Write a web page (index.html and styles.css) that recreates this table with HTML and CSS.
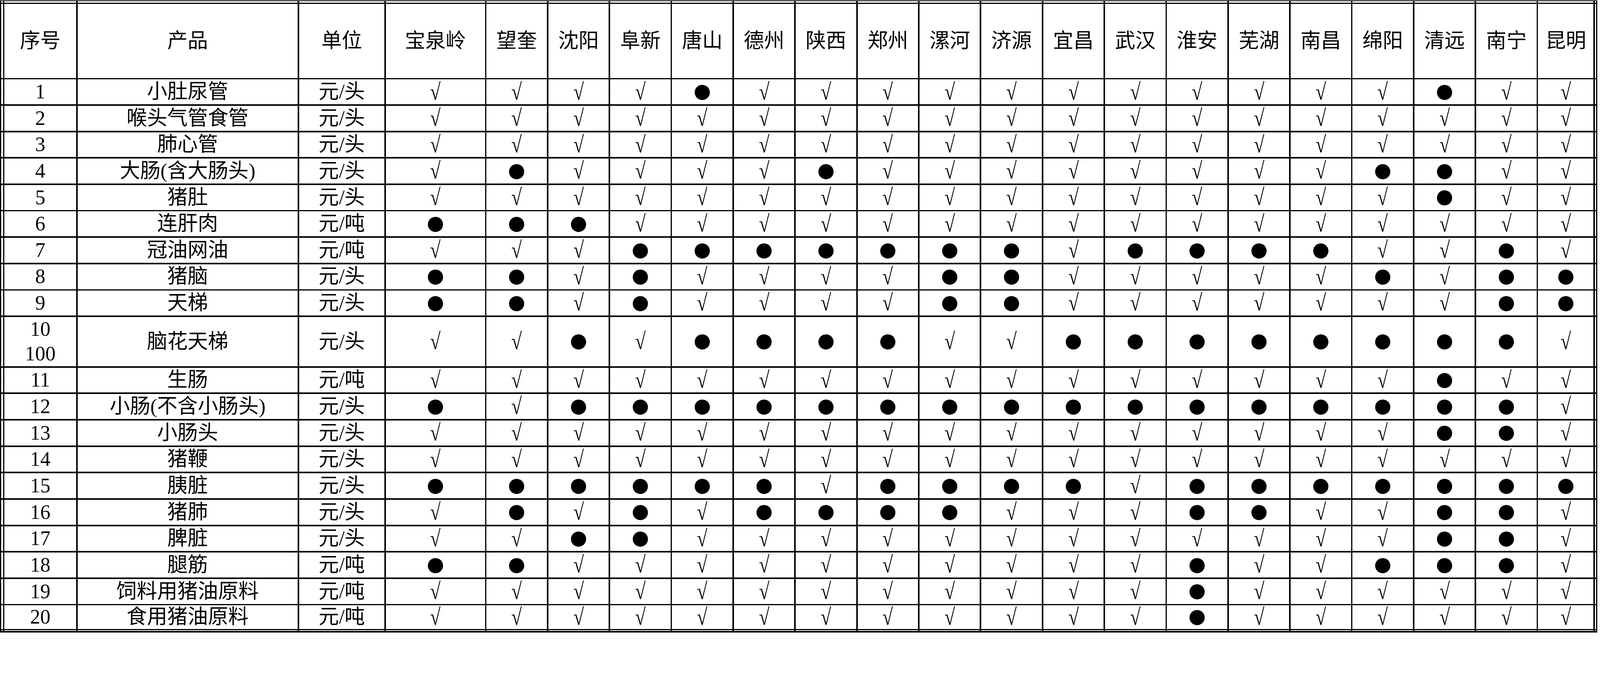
FILE: index.html
```html
<!DOCTYPE html>
<html lang="zh-CN">
<head>
<meta charset="utf-8">
<title>副产品表</title>
<link rel="stylesheet" href="styles.css">
</head>
<body>
<div class="sheet">
<div class="e"></div><div class="e"></div><div class="e"></div><div class="e"></div><div class="e"></div><div class="e"></div><div class="e"></div><div class="e"></div><div class="e"></div><div class="e"></div><div class="e"></div><div class="e"></div><div class="e"></div><div class="e"></div><div class="e"></div><div class="e"></div><div class="e"></div><div class="e"></div><div class="e"></div><div class="e"></div><div class="e"></div><div class="e"></div><div class="e"></div><div class="e"></div>
<div class="e"></div><div class="c">序号</div><div class="c">产品</div><div class="c">单位</div><div class="c">宝泉岭</div><div class="c">望奎</div><div class="c">沈阳</div><div class="c">阜新</div><div class="c">唐山</div><div class="c">德州</div><div class="c">陕西</div><div class="c">郑州</div><div class="c">漯河</div><div class="c">济源</div><div class="c">宜昌</div><div class="c">武汉</div><div class="c">淮安</div><div class="c">芜湖</div><div class="c">南昌</div><div class="c">绵阳</div><div class="c">清远</div><div class="c">南宁</div><div class="c">昆明</div><div class="e"></div>
<div class="e"></div><div class="c">1</div><div class="c">小肚尿管</div><div class="c">元/头</div><div class="c"><span class="v">√</span></div><div class="c"><span class="v">√</span></div><div class="c"><span class="v">√</span></div><div class="c"><span class="v">√</span></div><div class="c d">●</div><div class="c"><span class="v">√</span></div><div class="c"><span class="v">√</span></div><div class="c"><span class="v">√</span></div><div class="c"><span class="v">√</span></div><div class="c"><span class="v">√</span></div><div class="c"><span class="v">√</span></div><div class="c"><span class="v">√</span></div><div class="c"><span class="v">√</span></div><div class="c"><span class="v">√</span></div><div class="c"><span class="v">√</span></div><div class="c"><span class="v">√</span></div><div class="c d">●</div><div class="c"><span class="v">√</span></div><div class="c"><span class="v">√</span></div><div class="e"></div>
<div class="e"></div><div class="c">2</div><div class="c">喉头气管食管</div><div class="c">元/头</div><div class="c"><span class="v">√</span></div><div class="c"><span class="v">√</span></div><div class="c"><span class="v">√</span></div><div class="c"><span class="v">√</span></div><div class="c"><span class="v">√</span></div><div class="c"><span class="v">√</span></div><div class="c"><span class="v">√</span></div><div class="c"><span class="v">√</span></div><div class="c"><span class="v">√</span></div><div class="c"><span class="v">√</span></div><div class="c"><span class="v">√</span></div><div class="c"><span class="v">√</span></div><div class="c"><span class="v">√</span></div><div class="c"><span class="v">√</span></div><div class="c"><span class="v">√</span></div><div class="c"><span class="v">√</span></div><div class="c"><span class="v">√</span></div><div class="c"><span class="v">√</span></div><div class="c"><span class="v">√</span></div><div class="e"></div>
<div class="e"></div><div class="c">3</div><div class="c">肺心管</div><div class="c">元/头</div><div class="c"><span class="v">√</span></div><div class="c"><span class="v">√</span></div><div class="c"><span class="v">√</span></div><div class="c"><span class="v">√</span></div><div class="c"><span class="v">√</span></div><div class="c"><span class="v">√</span></div><div class="c"><span class="v">√</span></div><div class="c"><span class="v">√</span></div><div class="c"><span class="v">√</span></div><div class="c"><span class="v">√</span></div><div class="c"><span class="v">√</span></div><div class="c"><span class="v">√</span></div><div class="c"><span class="v">√</span></div><div class="c"><span class="v">√</span></div><div class="c"><span class="v">√</span></div><div class="c"><span class="v">√</span></div><div class="c"><span class="v">√</span></div><div class="c"><span class="v">√</span></div><div class="c"><span class="v">√</span></div><div class="e"></div>
<div class="e"></div><div class="c">4</div><div class="c">大肠(含大肠头)</div><div class="c">元/头</div><div class="c"><span class="v">√</span></div><div class="c d">●</div><div class="c"><span class="v">√</span></div><div class="c"><span class="v">√</span></div><div class="c"><span class="v">√</span></div><div class="c"><span class="v">√</span></div><div class="c d">●</div><div class="c"><span class="v">√</span></div><div class="c"><span class="v">√</span></div><div class="c"><span class="v">√</span></div><div class="c"><span class="v">√</span></div><div class="c"><span class="v">√</span></div><div class="c"><span class="v">√</span></div><div class="c"><span class="v">√</span></div><div class="c"><span class="v">√</span></div><div class="c d">●</div><div class="c d">●</div><div class="c"><span class="v">√</span></div><div class="c"><span class="v">√</span></div><div class="e"></div>
<div class="e"></div><div class="c">5</div><div class="c">猪肚</div><div class="c">元/头</div><div class="c"><span class="v">√</span></div><div class="c"><span class="v">√</span></div><div class="c"><span class="v">√</span></div><div class="c"><span class="v">√</span></div><div class="c"><span class="v">√</span></div><div class="c"><span class="v">√</span></div><div class="c"><span class="v">√</span></div><div class="c"><span class="v">√</span></div><div class="c"><span class="v">√</span></div><div class="c"><span class="v">√</span></div><div class="c"><span class="v">√</span></div><div class="c"><span class="v">√</span></div><div class="c"><span class="v">√</span></div><div class="c"><span class="v">√</span></div><div class="c"><span class="v">√</span></div><div class="c"><span class="v">√</span></div><div class="c d">●</div><div class="c"><span class="v">√</span></div><div class="c"><span class="v">√</span></div><div class="e"></div>
<div class="e"></div><div class="c">6</div><div class="c">连肝肉</div><div class="c">元/吨</div><div class="c d">●</div><div class="c d">●</div><div class="c d">●</div><div class="c"><span class="v">√</span></div><div class="c"><span class="v">√</span></div><div class="c"><span class="v">√</span></div><div class="c"><span class="v">√</span></div><div class="c"><span class="v">√</span></div><div class="c"><span class="v">√</span></div><div class="c"><span class="v">√</span></div><div class="c"><span class="v">√</span></div><div class="c"><span class="v">√</span></div><div class="c"><span class="v">√</span></div><div class="c"><span class="v">√</span></div><div class="c"><span class="v">√</span></div><div class="c"><span class="v">√</span></div><div class="c"><span class="v">√</span></div><div class="c"><span class="v">√</span></div><div class="c"><span class="v">√</span></div><div class="e"></div>
<div class="e"></div><div class="c">7</div><div class="c">冠油网油</div><div class="c">元/吨</div><div class="c"><span class="v">√</span></div><div class="c"><span class="v">√</span></div><div class="c"><span class="v">√</span></div><div class="c d">●</div><div class="c d">●</div><div class="c d">●</div><div class="c d">●</div><div class="c d">●</div><div class="c d">●</div><div class="c d">●</div><div class="c"><span class="v">√</span></div><div class="c d">●</div><div class="c d">●</div><div class="c d">●</div><div class="c d">●</div><div class="c"><span class="v">√</span></div><div class="c"><span class="v">√</span></div><div class="c d">●</div><div class="c"><span class="v">√</span></div><div class="e"></div>
<div class="e"></div><div class="c">8</div><div class="c">猪脑</div><div class="c">元/头</div><div class="c d">●</div><div class="c d">●</div><div class="c"><span class="v">√</span></div><div class="c d">●</div><div class="c"><span class="v">√</span></div><div class="c"><span class="v">√</span></div><div class="c"><span class="v">√</span></div><div class="c"><span class="v">√</span></div><div class="c d">●</div><div class="c d">●</div><div class="c"><span class="v">√</span></div><div class="c"><span class="v">√</span></div><div class="c"><span class="v">√</span></div><div class="c"><span class="v">√</span></div><div class="c"><span class="v">√</span></div><div class="c d">●</div><div class="c"><span class="v">√</span></div><div class="c d">●</div><div class="c d">●</div><div class="e"></div>
<div class="e"></div><div class="c">9</div><div class="c">天梯</div><div class="c">元/头</div><div class="c d">●</div><div class="c d">●</div><div class="c"><span class="v">√</span></div><div class="c d">●</div><div class="c"><span class="v">√</span></div><div class="c"><span class="v">√</span></div><div class="c"><span class="v">√</span></div><div class="c"><span class="v">√</span></div><div class="c d">●</div><div class="c d">●</div><div class="c"><span class="v">√</span></div><div class="c"><span class="v">√</span></div><div class="c"><span class="v">√</span></div><div class="c"><span class="v">√</span></div><div class="c"><span class="v">√</span></div><div class="c"><span class="v">√</span></div><div class="c"><span class="v">√</span></div><div class="c d">●</div><div class="c d">●</div><div class="e"></div>
<div class="e"></div><div class="c two">10<br>100</div><div class="c">脑花天梯</div><div class="c">元/头</div><div class="c"><span class="v">√</span></div><div class="c"><span class="v">√</span></div><div class="c d">●</div><div class="c"><span class="v">√</span></div><div class="c d">●</div><div class="c d">●</div><div class="c d">●</div><div class="c d">●</div><div class="c"><span class="v">√</span></div><div class="c"><span class="v">√</span></div><div class="c d">●</div><div class="c d">●</div><div class="c d">●</div><div class="c d">●</div><div class="c d">●</div><div class="c d">●</div><div class="c d">●</div><div class="c d">●</div><div class="c"><span class="v">√</span></div><div class="e"></div>
<div class="e"></div><div class="c">11</div><div class="c">生肠</div><div class="c">元/吨</div><div class="c"><span class="v">√</span></div><div class="c"><span class="v">√</span></div><div class="c"><span class="v">√</span></div><div class="c"><span class="v">√</span></div><div class="c"><span class="v">√</span></div><div class="c"><span class="v">√</span></div><div class="c"><span class="v">√</span></div><div class="c"><span class="v">√</span></div><div class="c"><span class="v">√</span></div><div class="c"><span class="v">√</span></div><div class="c"><span class="v">√</span></div><div class="c"><span class="v">√</span></div><div class="c"><span class="v">√</span></div><div class="c"><span class="v">√</span></div><div class="c"><span class="v">√</span></div><div class="c"><span class="v">√</span></div><div class="c d">●</div><div class="c"><span class="v">√</span></div><div class="c"><span class="v">√</span></div><div class="e"></div>
<div class="e"></div><div class="c">12</div><div class="c">小肠(不含小肠头)</div><div class="c">元/头</div><div class="c d">●</div><div class="c"><span class="v">√</span></div><div class="c d">●</div><div class="c d">●</div><div class="c d">●</div><div class="c d">●</div><div class="c d">●</div><div class="c d">●</div><div class="c d">●</div><div class="c d">●</div><div class="c d">●</div><div class="c d">●</div><div class="c d">●</div><div class="c d">●</div><div class="c d">●</div><div class="c d">●</div><div class="c d">●</div><div class="c d">●</div><div class="c"><span class="v">√</span></div><div class="e"></div>
<div class="e"></div><div class="c">13</div><div class="c">小肠头</div><div class="c">元/头</div><div class="c"><span class="v">√</span></div><div class="c"><span class="v">√</span></div><div class="c"><span class="v">√</span></div><div class="c"><span class="v">√</span></div><div class="c"><span class="v">√</span></div><div class="c"><span class="v">√</span></div><div class="c"><span class="v">√</span></div><div class="c"><span class="v">√</span></div><div class="c"><span class="v">√</span></div><div class="c"><span class="v">√</span></div><div class="c"><span class="v">√</span></div><div class="c"><span class="v">√</span></div><div class="c"><span class="v">√</span></div><div class="c"><span class="v">√</span></div><div class="c"><span class="v">√</span></div><div class="c"><span class="v">√</span></div><div class="c d">●</div><div class="c d">●</div><div class="c"><span class="v">√</span></div><div class="e"></div>
<div class="e"></div><div class="c">14</div><div class="c">猪鞭</div><div class="c">元/头</div><div class="c"><span class="v">√</span></div><div class="c"><span class="v">√</span></div><div class="c"><span class="v">√</span></div><div class="c"><span class="v">√</span></div><div class="c"><span class="v">√</span></div><div class="c"><span class="v">√</span></div><div class="c"><span class="v">√</span></div><div class="c"><span class="v">√</span></div><div class="c"><span class="v">√</span></div><div class="c"><span class="v">√</span></div><div class="c"><span class="v">√</span></div><div class="c"><span class="v">√</span></div><div class="c"><span class="v">√</span></div><div class="c"><span class="v">√</span></div><div class="c"><span class="v">√</span></div><div class="c"><span class="v">√</span></div><div class="c"><span class="v">√</span></div><div class="c"><span class="v">√</span></div><div class="c"><span class="v">√</span></div><div class="e"></div>
<div class="e"></div><div class="c">15</div><div class="c">胰脏</div><div class="c">元/头</div><div class="c d">●</div><div class="c d">●</div><div class="c d">●</div><div class="c d">●</div><div class="c d">●</div><div class="c d">●</div><div class="c"><span class="v">√</span></div><div class="c d">●</div><div class="c d">●</div><div class="c d">●</div><div class="c d">●</div><div class="c"><span class="v">√</span></div><div class="c d">●</div><div class="c d">●</div><div class="c d">●</div><div class="c d">●</div><div class="c d">●</div><div class="c d">●</div><div class="c d">●</div><div class="e"></div>
<div class="e"></div><div class="c">16</div><div class="c">猪肺</div><div class="c">元/头</div><div class="c"><span class="v">√</span></div><div class="c d">●</div><div class="c"><span class="v">√</span></div><div class="c d">●</div><div class="c"><span class="v">√</span></div><div class="c d">●</div><div class="c d">●</div><div class="c d">●</div><div class="c d">●</div><div class="c"><span class="v">√</span></div><div class="c"><span class="v">√</span></div><div class="c"><span class="v">√</span></div><div class="c d">●</div><div class="c d">●</div><div class="c"><span class="v">√</span></div><div class="c"><span class="v">√</span></div><div class="c d">●</div><div class="c d">●</div><div class="c"><span class="v">√</span></div><div class="e"></div>
<div class="e"></div><div class="c">17</div><div class="c">脾脏</div><div class="c">元/头</div><div class="c"><span class="v">√</span></div><div class="c"><span class="v">√</span></div><div class="c d">●</div><div class="c d">●</div><div class="c"><span class="v">√</span></div><div class="c"><span class="v">√</span></div><div class="c"><span class="v">√</span></div><div class="c"><span class="v">√</span></div><div class="c"><span class="v">√</span></div><div class="c"><span class="v">√</span></div><div class="c"><span class="v">√</span></div><div class="c"><span class="v">√</span></div><div class="c"><span class="v">√</span></div><div class="c"><span class="v">√</span></div><div class="c"><span class="v">√</span></div><div class="c"><span class="v">√</span></div><div class="c d">●</div><div class="c d">●</div><div class="c"><span class="v">√</span></div><div class="e"></div>
<div class="e"></div><div class="c">18</div><div class="c">腿筋</div><div class="c">元/吨</div><div class="c d">●</div><div class="c d">●</div><div class="c"><span class="v">√</span></div><div class="c"><span class="v">√</span></div><div class="c"><span class="v">√</span></div><div class="c"><span class="v">√</span></div><div class="c"><span class="v">√</span></div><div class="c"><span class="v">√</span></div><div class="c"><span class="v">√</span></div><div class="c"><span class="v">√</span></div><div class="c"><span class="v">√</span></div><div class="c"><span class="v">√</span></div><div class="c d">●</div><div class="c"><span class="v">√</span></div><div class="c"><span class="v">√</span></div><div class="c d">●</div><div class="c d">●</div><div class="c d">●</div><div class="c"><span class="v">√</span></div><div class="e"></div>
<div class="e"></div><div class="c">19</div><div class="c">饲料用猪油原料</div><div class="c">元/吨</div><div class="c"><span class="v">√</span></div><div class="c"><span class="v">√</span></div><div class="c"><span class="v">√</span></div><div class="c"><span class="v">√</span></div><div class="c"><span class="v">√</span></div><div class="c"><span class="v">√</span></div><div class="c"><span class="v">√</span></div><div class="c"><span class="v">√</span></div><div class="c"><span class="v">√</span></div><div class="c"><span class="v">√</span></div><div class="c"><span class="v">√</span></div><div class="c"><span class="v">√</span></div><div class="c d">●</div><div class="c"><span class="v">√</span></div><div class="c"><span class="v">√</span></div><div class="c"><span class="v">√</span></div><div class="c"><span class="v">√</span></div><div class="c"><span class="v">√</span></div><div class="c"><span class="v">√</span></div><div class="e"></div>
<div class="e"></div><div class="c">20</div><div class="c">食用猪油原料</div><div class="c">元/吨</div><div class="c"><span class="v">√</span></div><div class="c"><span class="v">√</span></div><div class="c"><span class="v">√</span></div><div class="c"><span class="v">√</span></div><div class="c"><span class="v">√</span></div><div class="c"><span class="v">√</span></div><div class="c"><span class="v">√</span></div><div class="c"><span class="v">√</span></div><div class="c"><span class="v">√</span></div><div class="c"><span class="v">√</span></div><div class="c"><span class="v">√</span></div><div class="c"><span class="v">√</span></div><div class="c d">●</div><div class="c"><span class="v">√</span></div><div class="c"><span class="v">√</span></div><div class="c"><span class="v">√</span></div><div class="c"><span class="v">√</span></div><div class="c"><span class="v">√</span></div><div class="c"><span class="v">√</span></div><div class="e"></div>
<div class="e"></div><div class="e"></div><div class="e"></div><div class="e"></div><div class="e"></div><div class="e"></div><div class="e"></div><div class="e"></div><div class="e"></div><div class="e"></div><div class="e"></div><div class="e"></div><div class="e"></div><div class="e"></div><div class="e"></div><div class="e"></div><div class="e"></div><div class="e"></div><div class="e"></div><div class="e"></div><div class="e"></div><div class="e"></div><div class="e"></div><div class="e"></div>
</div>
</body>
</html>
```

FILE: styles.css
```css
:root {
  --u: calc(100vw / 4328);
}

html, body {
  margin: 0;
  padding: 0;
  background: #ffffff;
}

.sheet {
  display: grid;
  width: max-content;
  margin-top: calc(1 * var(--u));
  padding: calc(2 * var(--u)) calc(3 * var(--u)) calc(4 * var(--u)) calc(3 * var(--u));
  background: #000000;
  grid-template-columns:
    calc(5 * var(--u))
    calc(194 * var(--u))
    calc(595 * var(--u))
    calc(231 * var(--u))
    calc(268 * var(--u))
    repeat(17, calc(163.35 * var(--u)))
    calc(150 * var(--u))
    calc(3 * var(--u));
  grid-template-rows:
    calc(4 * var(--u))
    calc(200 * var(--u))
    repeat(9, calc(67.45 * var(--u)))
    calc(133 * var(--u))
    repeat(9, calc(67.5 * var(--u)))
    calc(63.5 * var(--u))
    calc(2 * var(--u));
  gap: calc(4 * var(--u));
}

.e {
  background: #ffffff;
}

.c {
  background: #ffffff;
  color: #000000;
  display: flex;
  align-items: center;
  justify-content: center;
  text-align: center;
  white-space: nowrap;
  font-family: "Liberation Serif", "Noto Sans CJK SC", serif;
  font-size: calc(55 * var(--u));
  line-height: 1.2;
}

.two {
  line-height: calc(66 * var(--u));
}

.v {
  display: inline-block;
  font-family: "Liberation Serif", serif;
  font-size: calc(63 * var(--u));
  line-height: 1;
  transform: scaleX(0.82);
}

.d {
  font-family: "DejaVu Sans", sans-serif;
  font-size: calc(54 * var(--u));
  line-height: 1;
  padding-bottom: calc(6 * var(--u));
}
```
